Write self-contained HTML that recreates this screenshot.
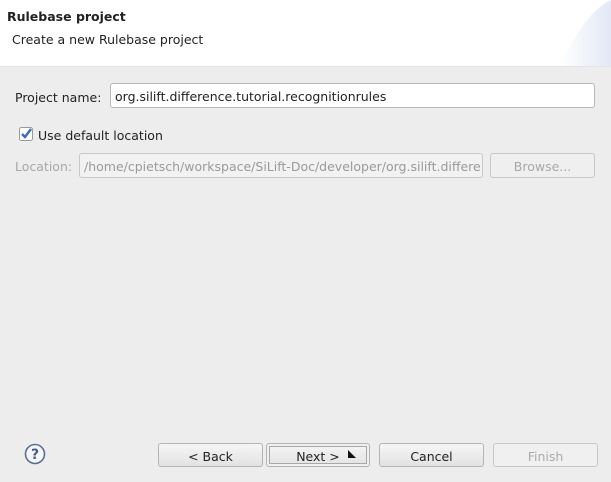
<html><head><style>
body{margin:0;width:611px;height:482px;background:#ededed;font-family:"DejaVu Sans",sans-serif;font-size:12.5px;color:#222;position:relative;overflow:hidden}
.a{position:absolute}
.hdr{left:0;top:0;width:611px;height:66px;background:#fff;border-bottom:1px solid #e4e4e4}
.f{background:#fff;border:1px solid #b8b8b8;border-radius:3px;box-sizing:border-box;padding:5px 4px 0 4px;white-space:nowrap;overflow:hidden}
.b{box-sizing:border-box;border:1px solid #b4b4b4;border-radius:3px;background:linear-gradient(#f6f6f6,#e2e2e2);text-align:center;line-height:25px}
</style></head><body>
<div class="a hdr">
<svg class="a" style="left:520px;top:0" width="91" height="66"><defs><linearGradient id="g" x1="0" x2="1"><stop offset="0" stop-color="#fff"/><stop offset="1" stop-color="#e3e8f6"/></linearGradient></defs><path d="M91 0 L91 66 L40 66 C55 35 70 10 91 0Z" fill="url(#g)"/></svg>
<div class="a" style="left:7px;top:9px;font-weight:bold">Rulebase project</div>
<div class="a" style="left:12px;top:32px">Create a new Rulebase project</div>
</div>
<div class="a" style="left:15px;top:90px">Project name:</div>
<div class="a f" style="left:110px;top:83px;width:485px;height:25px">org.silift.difference.tutorial.recognitionrules</div>
<svg class="a" style="left:19px;top:127px" width="14" height="14"><rect x="0.5" y="0.5" width="13" height="13" rx="2" fill="#fff" stroke="#999"/><path d="M3 7 L6 10 L12 2" stroke="#3b6fb6" stroke-width="2.5" fill="none"/></svg>
<div class="a" style="left:38px;top:128px">Use default location</div>
<div class="a" style="left:15px;top:159px;color:#a8a8a8">Location:</div>
<div class="a f" style="left:79px;top:153px;width:404px;height:25px;background:#f2f2f2;color:#9a9a9a;border-color:#c8c8c8">/home/cpietsch/workspace/SiLift-Doc/developer/org.silift.differe</div>
<div class="a b" style="left:490px;top:153px;width:105px;height:25px;color:#a8a8a8;background:#efefef;border-color:#c8c8c8">Browse...</div>
<svg class="a" style="left:24px;top:443px" width="22" height="22"><circle cx="11" cy="11" r="9.5" fill="#f4f6fa" stroke="#5a6e92" stroke-width="1.6"/><text x="11" y="16" text-anchor="middle" font-family="DejaVu Sans" font-weight="bold" font-size="14" fill="#4a5e82">?</text></svg>
<div class="a b" style="left:158px;top:443px;width:105px;height:24px">&lt; Back</div>
<div class="a b" style="left:266px;top:443px;width:104px;height:24px;box-shadow:inset 0 0 0 2px #f0f0f0,inset 0 0 0 3px #a8a8a8">Next &gt;</div>
<svg class="a" style="left:347px;top:450px" width="10" height="10"><path d="M1 0 L1 8 L9 8Z" fill="#111"/></svg>
<div class="a b" style="left:379px;top:443px;width:105px;height:24px">Cancel</div>
<div class="a b" style="left:493px;top:443px;width:105px;height:24px;color:#aaa;background:#f0f0f0;border-color:#c8c8c8">Finish</div>
</body></html>
